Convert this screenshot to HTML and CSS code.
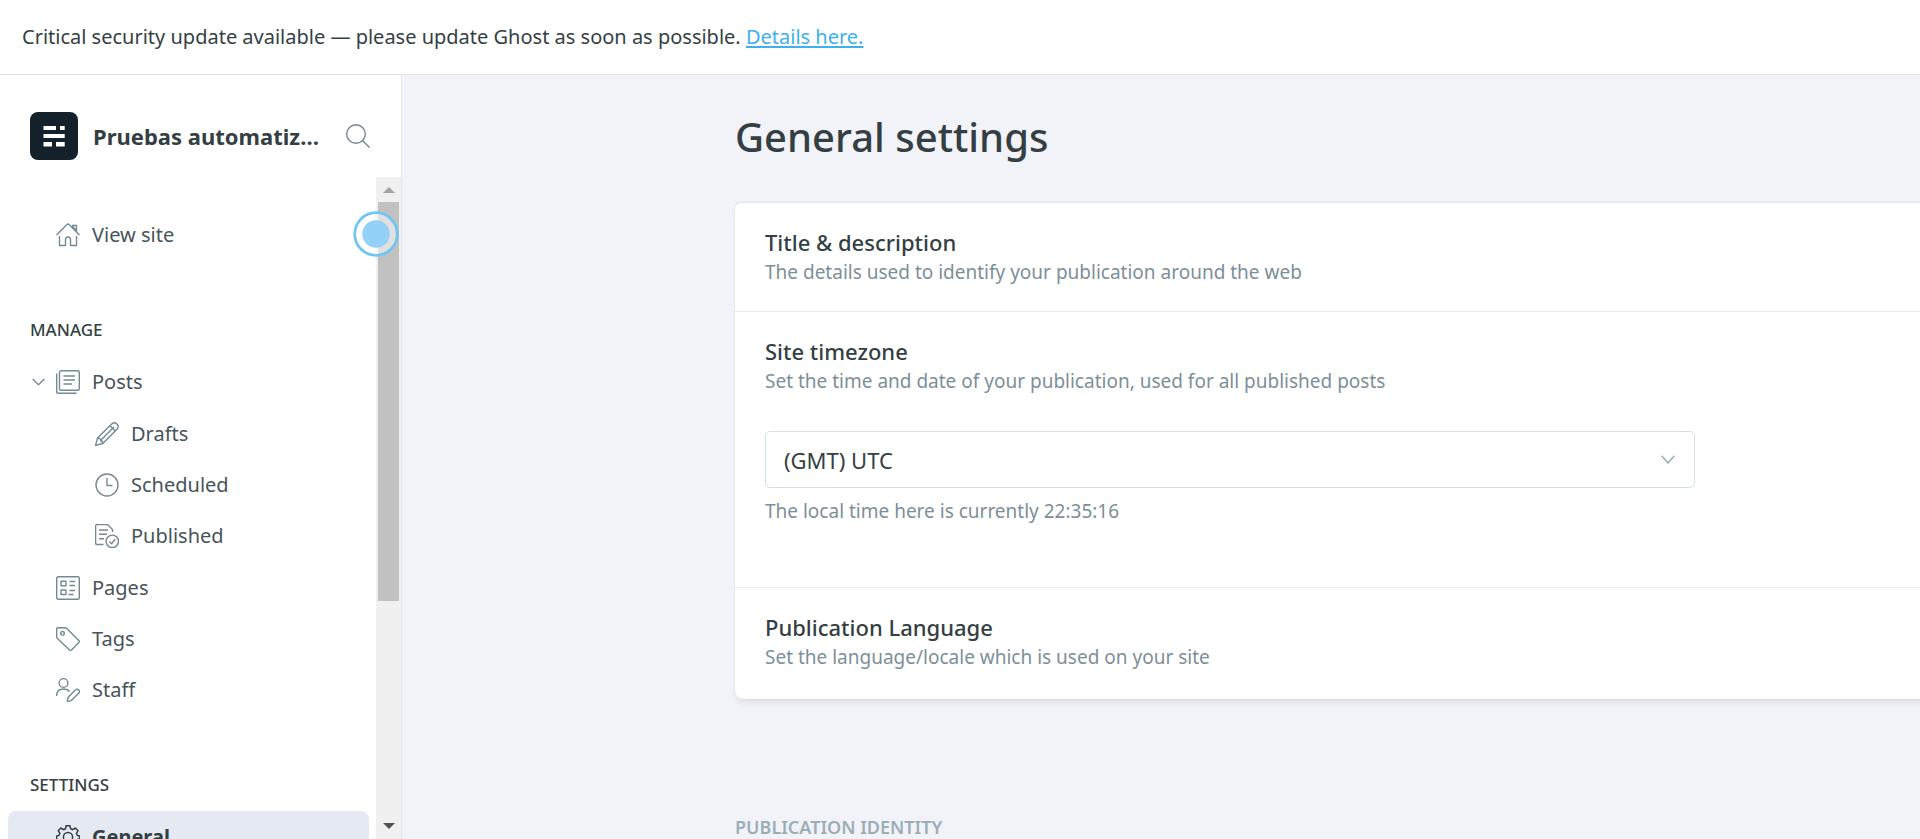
FILE: index.html
```html
<!DOCTYPE html>
<html lang="en">
<head>
<meta charset="utf-8">
<title>General settings</title>
<link rel="stylesheet" href="styles.css">
</head>
<body>
<div class="app">
  <aside class="banner">Critical security update available — please update Ghost as soon as possible. <a href="#details">Details here.</a></aside>
  <div class="viewport">
    <nav class="sidebar">
      <header class="site-head">
        <svg class="logo" viewBox="0 0 48 48" aria-hidden="true">
          <rect width="48" height="48" rx="8" fill="#15212a"/>
          <path fill="#fff" d="M13.500 14h12.500v4H13.500zM30 14h4.700v4H30zM13.500 22h21.200v4H13.500zM13.500 30H22v4.500h-8.500zM26 30h8.700v4.500H26z"/>
        </svg>
        <div class="site-name">Pruebas automatiz…</div>
        <button class="search" type="button" aria-label="Search">
          <svg class="icon" viewBox="0 0 24 24"><circle cx="10" cy="10" r="9.300"/><path d="M16.700 16.700l7 7"/></svg>
        </button>
      </header>
      <div class="nav-body">
        <div class="nav-scroll">
          <a class="item" href="#site">
            <svg class="icon" viewBox="0 0 24 24"><path d="M.5 12L11 1.500q1-1 2 0L23.500 12M3.500 13v9.500h6V17q0-3 2.500-3t2.500 3v5.500h6V13M16 2.500h4.500V8.500M16 3l4.500 4.500"/></svg>
            <span>View site</span></a>
          <h2 class="group">Manage</h2>
          <a class="item" href="#posts">
            <svg class="icon chevron" viewBox="0 0 14 8"><path d="M.7.8L7 7 13.300.8"/></svg>
            <svg class="icon" viewBox="0 0 24 24"><rect x="3.500" y=".7" width="19.800" height="19.500" rx="1.500"/><path d="M.7 3.500V21.500q0 1.800 1.800 1.800H20.500M7.500 6h11.500M7.500 10h11.500M7.500 14h8.500"/></svg>
            <span>Posts</span></a>
          <div class="sub">
            <a class="item" href="#drafts">
              <svg class="icon" viewBox="0 0 24 24"><path d="M.6 23.400L2.500 16 17 1.700q2.700-2 5 .2t.2 5L7.800 21.500zM2.500 16q3.200.2 3 2.500 2.300.2 2.300 3M5.500 18.500L19 5M15 3.700l5.300 5.300"/></svg>
              <span>Drafts</span></a>
            <a class="item" href="#scheduled">
              <svg class="icon" viewBox="0 0 24 24"><circle cx="12" cy="12" r="11"/><path d="M12 5v7.500h5.500"/></svg>
              <span>Scheduled</span></a>
            <a class="item" href="#published">
              <svg class="icon" viewBox="0 0 24 24"><path d="M8.500 20.500H2q-1.400 0-1.400-1.400V2Q.6.600 2 .6h10.500l5 5V8M4 6h9M4 10.300h8M4 14.700h5"/><circle cx="17.300" cy="17.300" r="6.200"/><path d="M14.300 17.500l2.200 2.200 3.700-4.700"/></svg>
              <span>Published</span></a>
          </div>
          <a class="item" href="#pages">
            <svg class="icon" viewBox="0 0 24 24"><rect x=".7" y=".7" width="22.600" height="22.600" rx="1.500"/><path d="M5 5.200h5v4.500H5zM5 14h5v4.500H5zM13.500 5.500h5.500M13.500 9.500h5.500M13.500 14.500h5.500M12.500 18.500h5"/></svg>
            <span>Pages</span></a>
          <a class="item" href="#tags">
            <svg class="icon" viewBox="0 0 24 24"><path d="M.7 2.300Q.7.700 2.300.7H9q1 0 1.800.8l12 12q1 1 0 2l-7.300 7.400q-1 1-2 0L1.500 11.500q-.8-.8-.8-1.800z"/><circle cx="6.500" cy="6.300" r="1.800"/></svg>
            <span>Tags</span></a>
          <a class="item" href="#staff">
            <svg class="icon" viewBox="0 0 24 24"><circle cx="7.500" cy="5" r="4.400"/><path d="M.6 18Q.6 11 7.500 11q4 0 6 2.500M11.300 23.400l.7-4 7.500-7.600q1.700-1.300 3.200.1t.2 3.100l-7.600 7.600z"/></svg>
            <span>Staff</span></a>
          <h2 class="group">Settings</h2>
          <a class="item active" href="#general">
            <svg class="icon" viewBox="0 0 24 24"><circle cx="12" cy="12" r="4.600"/><path d="M10 .8h4l.6 3 2.200.9 2.600-1.700 2.700 2.700-1.700 2.600 1 2.200 2.300.5v3l-2.600.6-1 2.200 1.700 2.600-2.700 2.700-2.600-1.700-2.200.9-.6 3h-4l-.6-3-2.200-.9-2.600 1.700-2.700-2.700 1.700-2.600-1-2.200L.5 14v-3l2.400-.5 1-2.200-1.700-2.600 2.700-2.700 2.600 1.700 2-.9z"/></svg>
            <span>General</span></a>
        </div>
        <div class="scrollbar" aria-hidden="true">
          <svg class="arrow up" viewBox="0 0 12 6"><path d="M6 0l6 6H0z"/></svg>
          <div class="track"><div class="thumb"></div></div>
          <svg class="arrow down" viewBox="0 0 12 6"><path d="M0 0h12L6 6z"/></svg>
          <svg class="pointer" viewBox="0 0 46 46"><circle cx="23" cy="23" r="21.300" fill="#fff" fill-opacity=".5" stroke="#6cc6f3" stroke-width="2.700"/><circle cx="23" cy="23" r="13.700" fill="#92d0f8"/><circle cx="23" cy="23" r="11" fill="none" stroke="#a3d6f7" stroke-width=".6"/></svg>
        </div>
      </div>
    </nav>
    <main class="main">
      <h1>General settings</h1>
      <section class="card">
        <div class="row">
          <h3>Title &amp; description</h3>
          <p>The details used to identify your publication around the web</p>
        </div>
        <div class="row">
          <h3><label for="tz">Site timezone</label></h3>
          <p>Set the time and date of your publication, used for all published posts</p>
          <div class="select">
            <select id="tz"><option>(GMT) UTC</option></select>
            <svg class="caret" viewBox="0 0 14 9"><path d="M.5.8L7 7.800 13.500.8"/></svg>
          </div>
          <p>The local time here is currently 22:35:16</p>
        </div>
        <div class="row">
          <h3>Publication Language</h3>
          <p>Set the language/locale which is used on your site</p>
        </div>
      </section>
      <h2 class="section-title">Publication identity</h2>
    </main>
  </div>
</div>
</body>
</html>
```

FILE: styles.css
```css
* { box-sizing: border-box; margin: 0; padding: 0; }

body {
  font-family: "Noto Sans", "Open Sans", sans-serif;
  font-size: 20px;
  color: #343f44;
  background: #fff;
}

.app { display: flex; flex-direction: column; height: 100vh; overflow: hidden; }

.banner {
  flex: none;
  padding: 22px;
  line-height: 30px;
  border-bottom: 1px solid #dfe1e3;
}
.banner a { color: #3eb0ef; text-decoration-thickness: 2px; text-underline-offset: 2px; }

.viewport { flex: 1; display: flex; min-height: 0; }

/* Sidebar */
.sidebar {
  flex: none;
  display: flex;
  flex-direction: column;
  width: 402px;
  border-right: 1px solid #e2e5ec;
}
.site-head {
  display: flex;
  align-items: center;
  flex: none;
  padding: 37px 31px 17px 30px;
}
.logo { flex: none; width: 48px; height: 48px; margin-right: 15px; }
.site-name {
  flex: 1;
  white-space: nowrap;
  font-size: 22px;
  font-weight: 700;
  line-height: 28px;
}
.search { flex: none; display: flex; margin-left: 20px; border: 0; background: none; }

.icon { flex: none; width: 24px; height: 24px; fill: none; stroke: #738a94; stroke-width: 1.4; stroke-linejoin: round; }

.nav-body { flex: 1; display: flex; min-height: 0; }
.nav-scroll { flex: 1; overflow: hidden; padding: 32px 7px 0 8px; }
.item {
  position: relative;
  display: flex;
  align-items: center;
  gap: 12px;
  height: 51px;
  padding-left: 48px;
  border-radius: 8px;
  color: #47545a;
  text-decoration: none;
}
.sub { margin: 1px 0; }
.sub .item { padding-left: 87px; }
.chevron { position: absolute; left: 24px; width: 13px; height: 8px; }
.active { background: #e5eaf2; color: #343f44; font-weight: 700; }
.active .icon { stroke: #343f44; stroke-width: 1.5; }
.group {
  margin: 58px 0 14px 22px;
  font-size: 17px;
  font-weight: 500;
  line-height: 24px;
  text-transform: uppercase;
}

.scrollbar {
  position: relative;
  flex: none;
  display: flex;
  flex-direction: column;
  align-items: center;
  width: 25px;
  background: #f0f0f0;
}
.arrow { flex: none; width: 12px; height: 6px; }
.up { margin: 10px 0 9px; fill: #a3a3a3; }
.down { margin: 10px 0; fill: #505050; }
.track { flex: 1; width: 21px; }
.thumb { height: 65.3%; background: #c1c1c1; }
.pointer { position: absolute; left: -23px; top: 34px; width: 46px; height: 46px; }

/* Settings */
.main { flex: 1; min-width: 0; overflow: hidden; padding: 32px 0 0 333px; background: #f2f3f8; }
h1 { font-size: 40px; font-weight: 500; line-height: 60px; margin-bottom: 35px; }
.card {
  margin-right: -16px;
  border-top: 1px solid #dfe9ee;
  border-radius: 6px 0 0 8px;
  background: #fff;
  box-shadow: 0 0 1px rgba(0, 0, 0, 0.2), 0 6px 10px -4px rgba(30, 20, 50, 0.12);
}
.row { padding: 25px 30px; }
.row + .row { border-top: 1px solid #e4ebef; }
.row:last-child { padding-bottom: 28px; }
.row:nth-child(2) { padding-bottom: 62px; }
h3 { font-size: 22px; font-weight: 500; line-height: 28px; padding-bottom: 2px; }
.row p { font-size: 19px; line-height: 28px; color: #7c8f99; }
.select { position: relative; max-width: 930px; margin: 36px 0 9px; }
.select select {
  display: block;
  width: 100%;
  height: 57px;
  padding: 0 18px;
  border: 1px solid #d5e1e9;
  border-radius: 5px;
  background: #fff;
  color: #343f44;
  font: inherit;
  font-size: 22px;
  appearance: none;
}
.caret { position: absolute; right: 20px; top: 24px; width: 14px; height: 9px; fill: none; stroke: #98abb6; stroke-width: 1.5; }
.section-title {
  margin-top: 116px;
  font-size: 18px;
  font-weight: 600;
  line-height: 24px;
  text-transform: uppercase;
  color: #9baeb8;
}
```
